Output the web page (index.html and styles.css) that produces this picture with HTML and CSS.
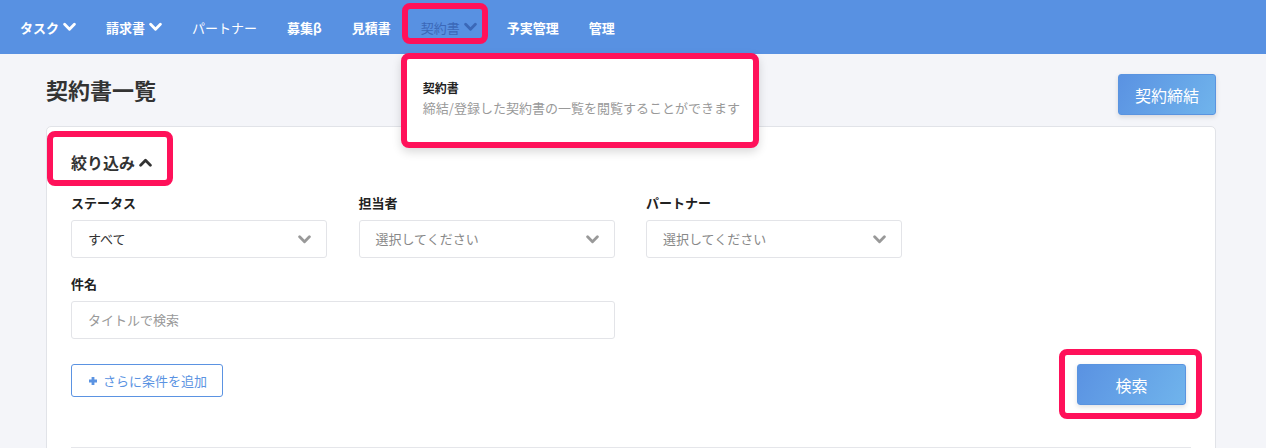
FILE: index.html
```html
<!DOCTYPE html>
<html lang="ja">
<head>
    <meta charset="UTF-8">
    <meta name="viewport" content="width=device-width, initial-scale=1.0">
    <title>契約書一覧</title>
    <link rel="stylesheet" href="styles.css">
</head>
<body>
    <nav class="navbar">
        <div class="nav-item">タスク <svg class="chev" viewBox="0 0 12 8"><polyline points="1.5,1.5 6,6 10.5,1.5"/></svg></div>
        <div class="nav-item">請求書 <svg class="chev" viewBox="0 0 12 8"><polyline points="1.5,1.5 6,6 10.5,1.5"/></svg></div>
        <div class="nav-item nav-light">パートナー</div>
        <div class="nav-item">募集β</div>
        <div class="nav-item">見積書</div>
        <div class="nav-item active marked">
            契約書 <svg class="chev" viewBox="0 0 12 8"><polyline points="1.5,1.5 6,6 10.5,1.5"/></svg>
            <div class="dropdown">
                <div class="dropdown-title">契約書</div>
                <div class="dropdown-desc">締結/登録した契約書の一覧を閲覧することができます</div>
            </div>
        </div>
        <div class="nav-item">予実管理</div>
        <div class="nav-item">管理</div>
    </nav>

    <main class="page">
        <div class="page-header">
            <h1>契約書一覧</h1>
            <button class="btn-primary btn-contract">契約締結</button>
        </div>

        <section class="card">
            <div class="filter-toggle marked">
                絞り込み <svg class="chev-up" viewBox="0 0 12 8"><polyline points="1.5,6.5 6,2 10.5,6.5"/></svg>
            </div>

            <div class="filter-grid">
                <div class="field">
                    <label>ステータス</label>
                    <div class="select">
                        <span class="value">すべて</span>
                        <svg class="select-chev" viewBox="0 0 12 8"><polyline points="1.5,1.5 6,6 10.5,1.5"/></svg>
                    </div>
                </div>
                <div class="field">
                    <label>担当者</label>
                    <div class="select">
                        <span class="placeholder">選択してください</span>
                        <svg class="select-chev" viewBox="0 0 12 8"><polyline points="1.5,1.5 6,6 10.5,1.5"/></svg>
                    </div>
                </div>
                <div class="field">
                    <label>パートナー</label>
                    <div class="select">
                        <span class="placeholder">選択してください</span>
                        <svg class="select-chev" viewBox="0 0 12 8"><polyline points="1.5,1.5 6,6 10.5,1.5"/></svg>
                    </div>
                </div>
                <div class="field field-wide">
                    <label>件名</label>
                    <input type="text" class="text-input" placeholder="タイトルで検索">
                </div>
            </div>

            <div class="filter-actions">
                <button class="btn-outline">
                    <svg class="plus" viewBox="0 0 10 10"><path d="M5 1v8M1 5h8"/></svg>
                    さらに条件を追加
                </button>
                <button class="btn-primary btn-search marked">検索</button>
            </div>

            <div class="divider"></div>
        </section>
    </main>
</body>
</html>
```

FILE: styles.css
```css
*,
*::before,
*::after {
    box-sizing: border-box;
}

body {
    margin: 0;
    font-family: "Noto Sans CJK JP", "Noto Sans", sans-serif;
    background: #f4f5f9;
    color: #333;
    overflow: hidden;
}

/* top navigation */
.navbar {
    height: 54px;
    background: #5891e2;
    display: flex;
    align-items: stretch;
    padding-left: 5px;
}

.nav-item {
    position: relative;
    display: flex;
    align-items: center;
    padding: 0 15px;
    color: #fff;
    font-size: 13px;
    font-weight: 700;
    white-space: nowrap;
}

.nav-light {
    font-weight: 400;
}

.nav-item.active {
    color: #3b68b8;
    font-weight: 400;
}

.chev {
    width: 13px;
    height: 10px;
    margin-left: 4px;
    fill: none;
    stroke: currentColor;
    stroke-width: 2.6;
    stroke-linecap: round;
    stroke-linejoin: round;
}

/* highlight frames */
.marked::before {
    content: "";
    position: absolute;
    border: 6px solid #ff115a;
    border-radius: 8px;
    pointer-events: none;
}

.nav-item.marked::before {
    left: -4px;
    right: 4px;
    top: 3px;
    bottom: 10px;
}

.dropdown {
    position: absolute;
    left: -5px;
    top: 53px;
    width: 358px;
    height: 95px;
    background: #fff;
    border: 6px solid #ff115a;
    border-radius: 8px;
    padding: 20px 16px 0;
    box-shadow: 0 4px 10px rgba(0, 0, 0, 0.15);
    z-index: 10;
}

.dropdown-title {
    color: #222;
    font-size: 12px;
    font-weight: 700;
    line-height: 18px;
}

.dropdown-desc {
    margin-top: 1px;
    color: #999;
    font-size: 13px;
    font-weight: 400;
    line-height: 20px;
}

/* page */
.page {
    width: 1170px;
    margin-left: 46px;
}

.page-header {
    display: flex;
    justify-content: space-between;
    align-items: flex-start;
    padding-top: 20px;
    margin-bottom: 11px;
}

h1 {
    margin: 0;
    font-size: 22px;
    font-weight: 700;
    line-height: 30px;
    color: #333;
}

.btn-primary {
    border: 1px solid #5a94e0;
    border-radius: 3px;
    background: linear-gradient(120deg, #5a92e2 0%, #70b4ec 100%);
    color: #fff;
    font-family: inherit;
    font-size: 16px;
    box-shadow: 0 2px 5px rgba(0, 0, 0, 0.12);
    cursor: pointer;
}

.btn-contract {
    width: 98px;
    height: 41px;
}

.card {
    background: #fff;
    border: 1px solid #e1e3e8;
    border-radius: 5px;
    padding: 0 24px;
    height: 400px;
}

.filter-toggle {
    position: relative;
    display: inline-flex;
    align-items: center;
    margin-top: 24px;
    font-size: 16px;
    font-weight: 700;
    line-height: 22px;
    color: #333;
}

.filter-toggle.marked::before {
    left: -24px;
    top: -20px;
    width: 126px;
    height: 55px;
}

.chev-up {
    width: 13px;
    height: 9px;
    margin-left: 4px;
    fill: none;
    stroke: #333;
    stroke-width: 2.6;
    stroke-linecap: round;
    stroke-linejoin: round;
}

.filter-grid {
    display: grid;
    grid-template-columns: repeat(3, 256px);
    column-gap: 31.5px;
    row-gap: 16px;
    margin-top: 19px;
}

.field label {
    display: block;
    font-size: 13px;
    font-weight: 700;
    line-height: 20px;
    margin-bottom: 7px;
    color: #222;
}

.field-wide {
    grid-column: span 2;
}

.select,
.text-input {
    height: 38px;
    border: 1px solid #e3e4e8;
    border-radius: 3px;
    background: #fff;
    font-size: 13px;
}

.select {
    display: flex;
    align-items: center;
    justify-content: space-between;
    padding: 0 15px 2px 16px;
}

.value {
    color: #333;
}

.placeholder {
    color: #888;
}

.select-chev {
    width: 13px;
    height: 9px;
    margin-top: 2px;
    fill: none;
    stroke: #999;
    stroke-width: 2.6;
    stroke-linecap: round;
    stroke-linejoin: round;
}

.text-input {
    width: 100%;
    padding: 0 16px 2px;
    font-family: inherit;
    color: #333;
    outline: none;
}

.text-input::placeholder {
    color: #999;
}

.filter-actions {
    display: flex;
    justify-content: space-between;
    align-items: flex-start;
    margin-top: 25px;
    padding-right: 5px;
}

.btn-outline {
    display: flex;
    align-items: center;
    width: 152px;
    height: 33px;
    padding: 0 0 0 16px;
    border: 1px solid #5b93e2;
    border-radius: 3px;
    background: #fff;
    color: #5b93e2;
    font-family: inherit;
    font-size: 13px;
    cursor: pointer;
}

.plus {
    width: 10px;
    height: 10px;
    margin-right: 5px;
    stroke: #5b93e2;
    stroke-width: 2.8;
}

.btn-search {
    position: relative;
    width: 109px;
    height: 41px;
}

.btn-search.marked::before {
    left: -19px;
    top: -16px;
    right: -17px;
    bottom: -15px;
}

.divider {
    margin-top: 42px;
    height: 1px;
    background: #e5e6ea;
}
```
